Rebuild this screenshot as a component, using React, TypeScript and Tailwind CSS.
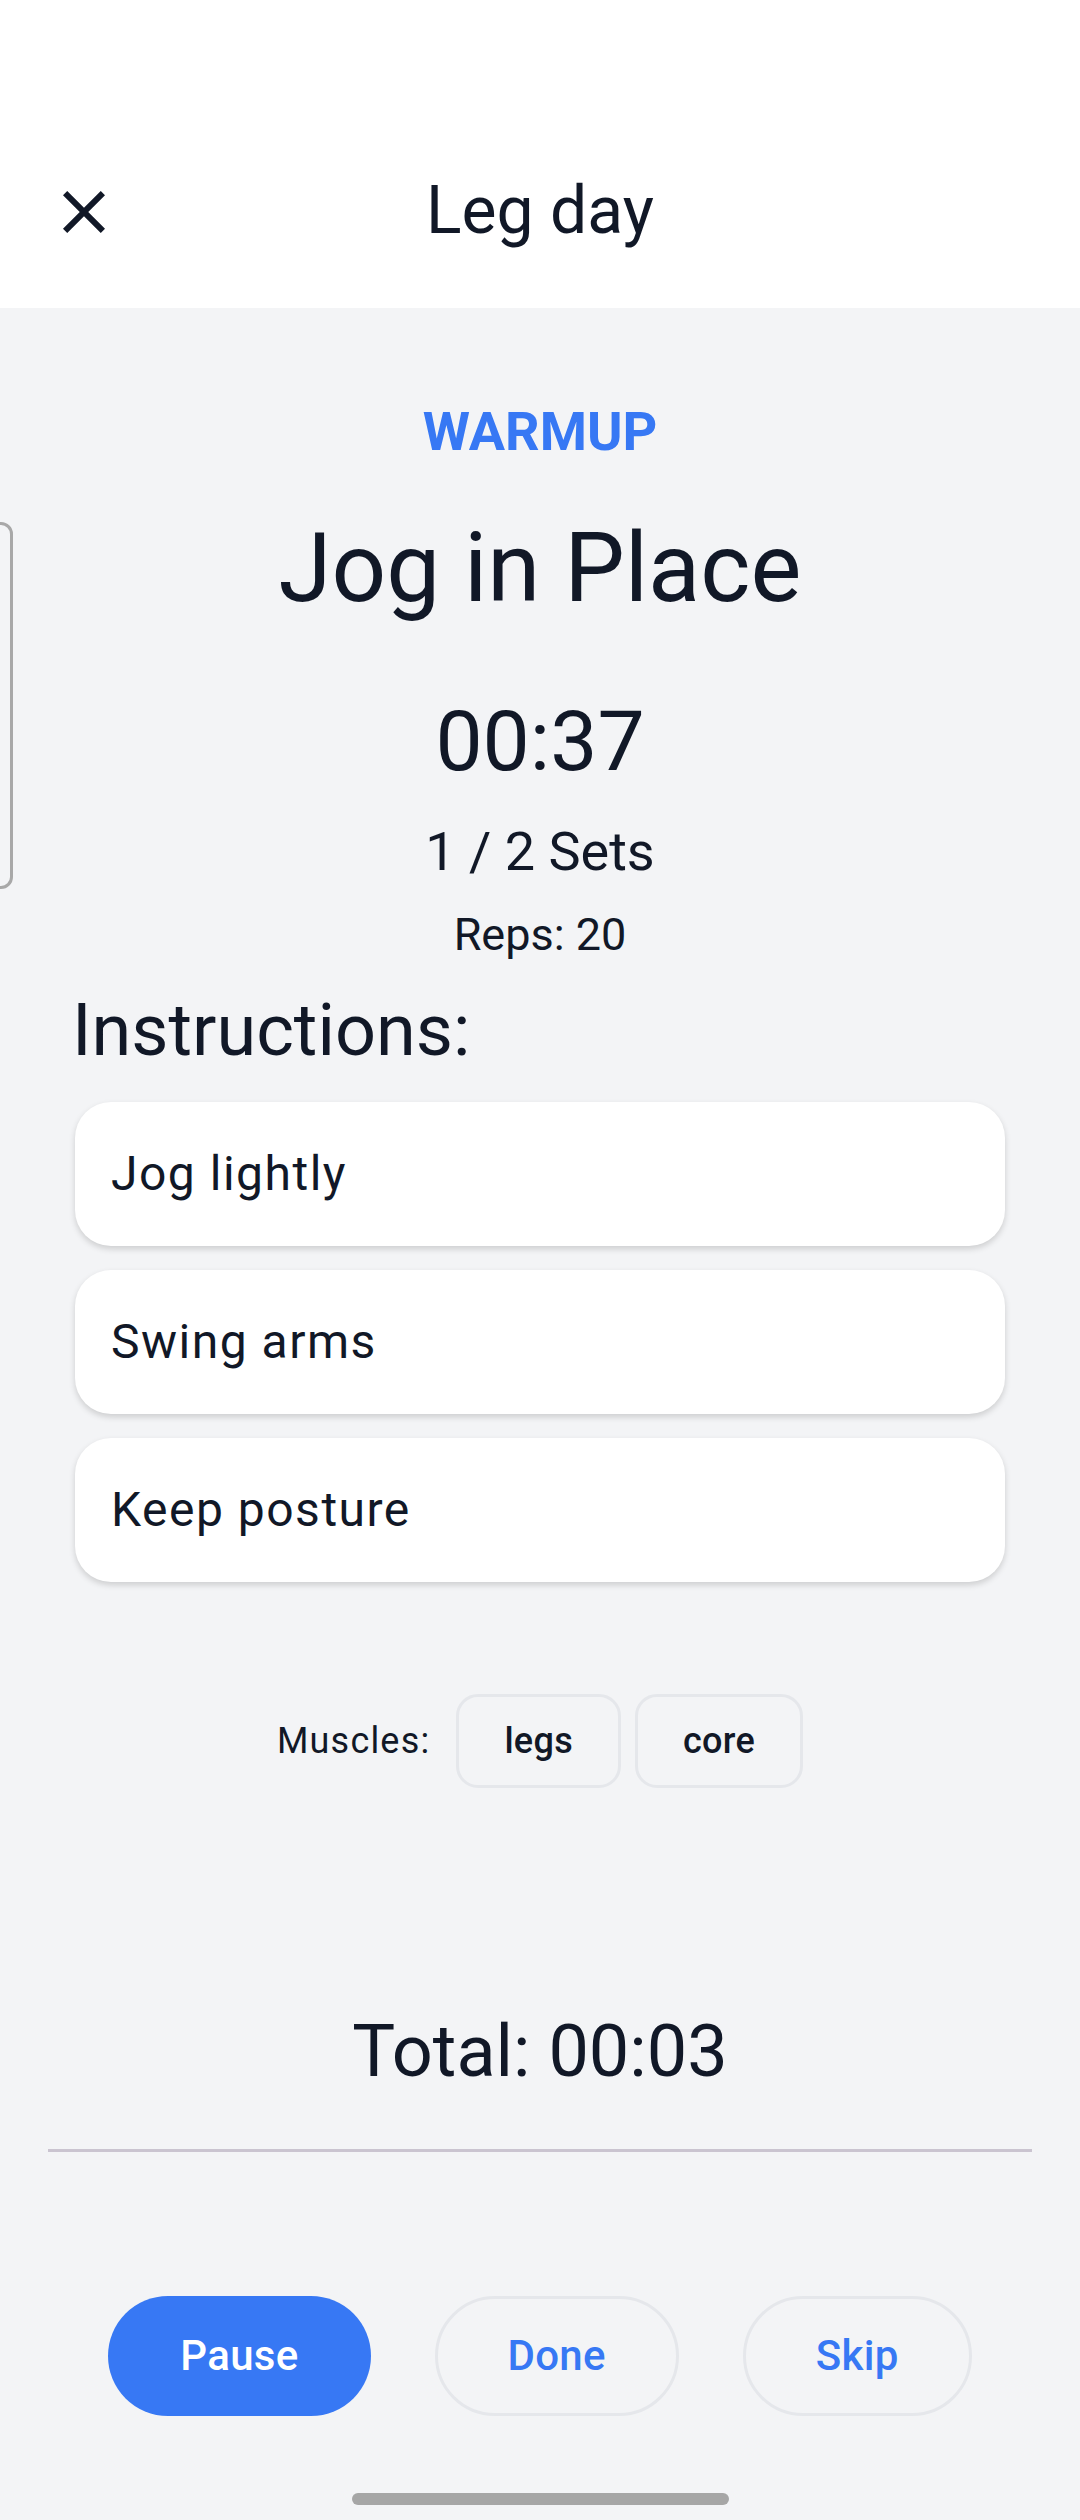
import React from "react";

// workout player screen
const steps = ["Jog lightly", "Swing arms", "Keep posture"];
const muscles = ["legs", "core"];

function CloseIcon() {
  return (
    <svg viewBox="0 0 24 24" className="h-[72px] w-[72px] fill-[#111827]">
      <path d="M19 6.41L17.59 5 12 10.59 6.41 5 5 6.41 10.59 12 5 17.59 6.41 19 12 13.41 17.59 19 19 17.59 13.41 12z" />
    </svg>
  );
}

export default function App() {
  return (
    <div
      className="relative flex h-[2520px] w-[1080px] flex-col overflow-hidden bg-[#f3f4f6] text-[#111827]"
      style={{ fontFamily: "Roboto, 'Noto Sans', sans-serif" }}
    >
      {/* top bar */}
      <div className="relative flex h-[308px] shrink-0 items-center justify-center bg-white pt-[114px]">
        <button className="absolute left-[48px] top-[176px] flex items-center justify-center">
          <CloseIcon />
        </button>
        <h1 className="text-[66px] leading-none">Leg day</h1>
      </div>

      {/* previous exercise peeking in */}
      <div className="absolute left-[-400px] top-[522px] h-[367px] w-[413px] rounded-[12px] border-[3px] border-[#a8a8a8]"></div>

      {/* exercise info */}
      <div className="flex flex-col items-center">
        <p className="mt-[97px] text-[54px] font-bold leading-none text-[#3778f4]">
          WARMUP
        </p>
        <h2 className="mt-[61px] text-[96px] leading-none">Jog in Place</h2>
        <p className="mt-[84px] text-[84px] leading-none">00:37</p>
        <p className="mt-[41px] text-[54px] leading-none">1 / 2 Sets</p>
        <p className="mt-[33px] text-[45px] leading-none">Reps: 20</p>
      </div>

      {/* instructions */}
      <div className="mt-[38px] px-[72px]">
        <h3 className="text-[72px] leading-none">Instructions:</h3>
      </div>
      <div className="mt-[35px] flex flex-col gap-[24px] pl-[75px] pr-[75px]">
        {steps.map((s) => (
          <div
            key={s}
            className="flex h-[144px] items-center rounded-[36px] bg-white px-[36px] shadow-[0_3px_6px_rgba(0,0,0,0.16)]"
          >
            <span className="text-[48px] leading-none tracking-[1.5px]">{s}</span>
          </div>
        ))}
      </div>

      {/* muscles */}
      <div className="mt-[112px] flex items-center justify-center">
        <span className="mr-[26px] text-[36px] leading-none tracking-[1.2px]">Muscles:</span>
        <div className="flex gap-[14px]">
          {muscles.map((m) => (
            <span
              key={m}
              className="flex h-[94px] items-center rounded-[22px] border-[3px] border-[#e5e7eb] px-[45px] text-[36px] font-medium leading-none tracking-[0.3px]"
            >
              {m}
            </span>
          ))}
        </div>
      </div>

      {/* total time */}
      <p className="mt-[228px] text-center text-[72px] leading-none">Total: 00:03</p>
      <div className="mx-[48px] mt-[61px] h-[3px] bg-[#cac4d0]"></div>

      {/* actions */}
      <div className="mt-[144px] flex items-center justify-center gap-[64px]">
        <button className="flex h-[120px] items-center rounded-full bg-[#3778f4] px-[72px] text-[42px] font-medium leading-none tracking-[0.3px] text-white">
          Pause
        </button>
        <button className="flex h-[120px] items-center rounded-full border-[3px] border-[#e5e7eb] px-[70px] text-[42px] font-medium leading-none tracking-[0.3px] text-[#3778f4]">
          Done
        </button>
        <button className="flex h-[120px] items-center rounded-full border-[3px] border-[#e5e7eb] px-[70px] text-[42px] font-medium leading-none tracking-[0.3px] text-[#3778f4]">
          Skip
        </button>
      </div>

      {/* gesture bar */}
      <div className="mt-[77px] flex justify-center">
        <div className="h-[12px] w-[377px] rounded-full bg-[#a6a6a6]"></div>
      </div>
    </div>
  );
}
